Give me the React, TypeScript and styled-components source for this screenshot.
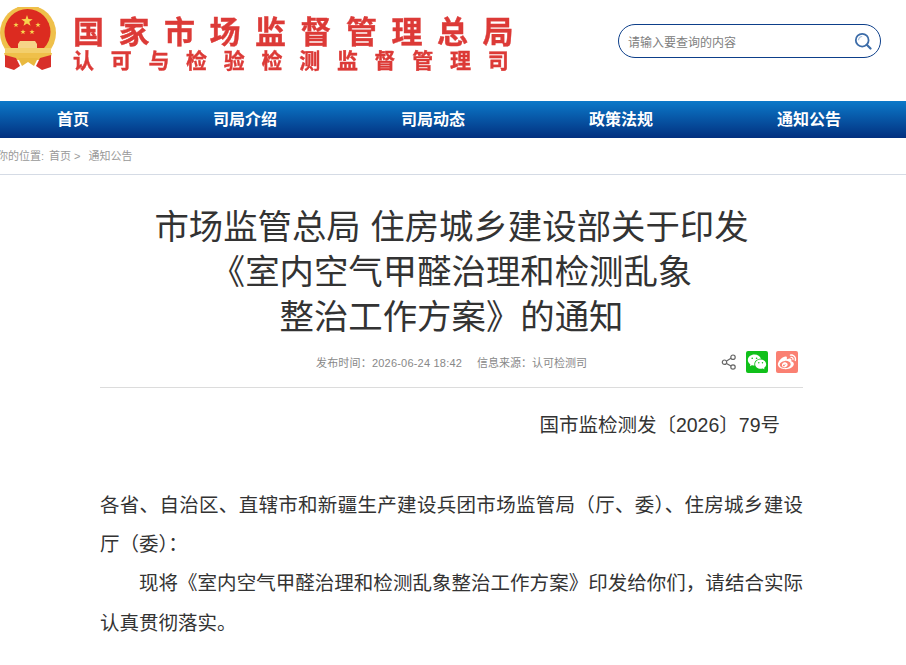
import React from "react";
import styled, { createGlobalStyle } from "styled-components";
import { RiWechatFill, RiWeiboFill } from "react-icons/ri";

const GlobalStyle = createGlobalStyle`
  html, body {
    margin: 0;
    padding: 0;
    background: #fff;
    overflow: hidden;
    font-family: "Liberation Sans", "Noto Sans CJK SC", sans-serif;
  }
`;

const Page = styled.div`
  width: 906px;
  height: 665px;
  overflow: hidden;
`;

const Header = styled.header`
  height: 101px;
  display: flex;
  align-items: flex-start;
  justify-content: space-between;
  padding-right: 25px;
`;

const Brand = styled.div`
  display: flex;
  margin-left: -1px;
  padding-top: 7px;
`;

const Emblem = styled.svg`
  width: 58px;
  height: 64px;
  flex: none;
`;

const BrandText = styled.div`
  margin-left: 16px;
  padding-top: 5px;
  color: #dc3a37;
  font-family: "Noto Sans CJK SC", sans-serif;
  font-weight: 700;
  white-space: nowrap;
  -webkit-text-stroke: 0.4px #dc3a37;
  filter: blur(0.3px);
`;

const BrandName = styled.div`
  font-size: 31px;
  line-height: 35px;
  letter-spacing: 14.5px;
`;

const BrandSub = styled.div`
  font-size: 21px;
  line-height: 22px;
  letter-spacing: 16.7px;
  margin-top: 1px;
`;

const SearchBox = styled.div`
  width: 263px;
  height: 34px;
  box-sizing: border-box;
  margin-top: 24px;
  padding: 0 8px 0 9px;
  border: 1px solid #0d3f8a;
  border-radius: 17px;
  display: flex;
  align-items: center;
  justify-content: space-between;
  font-size: 12px;
  color: #808080;
`;

const SearchIcon = styled.svg`
  width: 18px;
  height: 18px;
`;

const Nav = styled.nav`
  height: 37px;
  background: linear-gradient(#0c79c9, #02307f);
  display: flex;
  gap: 124px;
  padding-left: 57px;
  overflow: hidden;
`;

const NavItem = styled.a`
  height: 37px;
  line-height: 37px;
  color: #fff;
  font-size: 16px;
  font-weight: 700;
  white-space: nowrap;
`;

const Crumbs = styled.div`
  height: 36px;
  line-height: 36px;
  border-bottom: 1px solid #d5dbe5;
  font-size: 11px;
  color: #999;
  white-space: nowrap;
  overflow: hidden;
`;

const CrumbInner = styled.div`
  margin-left: -3px;
  display: flex;
  gap: 3px;
`;

const CrumbLink = styled.span<{ $space: number }>`
  margin-left: ${(p) => p.$space}px;
`;

const Article = styled.main`
  width: 703px;
  margin-left: 100px;
`;

const Title = styled.h1`
  margin: 30px 0 0;
  font-size: 34.4px;
  line-height: 44.8px;
  font-weight: 400;
  text-align: center;
  color: #333;
`;

const MetaRow = styled.div`
  display: grid;
  grid-template-columns: 1fr auto 1fr;
  align-items: center;
  height: 45px;
  border-bottom: 1px solid #dcdcdc;
  padding-bottom: 3px;
  font-size: 11px;
  color: #888;
`;

const MetaText = styled.div`
  grid-column: 2;
  display: flex;
  gap: 15px;
`;

const MetaDate = styled.span`
  letter-spacing: 0.2px;
`;

const Shares = styled.div`
  grid-column: 3;
  display: flex;
  justify-content: flex-end;
  align-items: center;
  gap: 8px;
  padding-right: 5px;
`;

const ShareGlyph = styled.svg`
  width: 16px;
  height: 16px;
  margin-right: 1px;
`;

const ShareBadge = styled.span<{ $bg: string }>`
  width: 22px;
  height: 22px;
  border-radius: 2px;
  background: ${(p) => p.$bg};
  display: flex;
  align-items: center;
  justify-content: center;
  color: #fff;
  font-size: 20px;
`;

const Body = styled.div`
  margin-top: 18px;
  font-size: 19.5px;
  line-height: 39.3px;
  color: #333;
`;

const DocNumber = styled.p`
  margin: 0 0 40px;
  padding-right: 23px;
  text-align: right;
`;

const Paragraph = styled.p<{ $indent?: boolean }>`
  margin: 0;
  text-align: justify;
  text-indent: ${(p) => (p.$indent ? "2em" : "0")};
`;

const navItems = ["首页", "司局介绍", "司局动态", "政策法规", "通知公告"];

// full-width punctuation is escaped on purpose
const dateLine = "发布时间\uFF1A2026-06-24 18:42";
const sourceLine = "信息来源\uFF1A认可检测司";
const greeting = "各省、自治区、直辖市和新疆生产建设兵团市场监管局\uFF08厅、委\uFF09、住房城乡建设厅\uFF08委\uFF09\uFF1A";
const notice = "现将《室内空气甲醛治理和检测乱象整治工作方案》印发给你们\uFF0C请结合实际认真贯彻落实。";

const star = (cx: number, cy: number, r: number) => {
  const pts: string[] = [];
  for (let i = 0; i < 10; i++) {
    const rad = i % 2 ? r * 0.4 : r;
    const a = (Math.PI / 5) * i - Math.PI / 2;
    pts.push(`${(cx + rad * Math.cos(a)).toFixed(2)},${(cy + rad * Math.sin(a)).toFixed(2)}`);
  }
  return pts.join(" ");
};

// viewBox uses page coordinates so the emblem parts line up with the picture
const EmblemIcon = () => (
  <Emblem viewBox="-1 7 58 64">
    <circle cx="28" cy="33" r="28" fill="#efc04a" />
    <circle cx="27.5" cy="32" r="23" fill="#dc2b20" />
    <polygon points={star(27, 21, 6)} fill="#f8d24e" />
    <polygon points={star(16, 25, 2.8)} fill="#f8d24e" />
    <polygon points={star(38, 25, 2.8)} fill="#f8d24e" />
    <polygon points={star(23, 32, 2.8)} fill="#f8d24e" />
    <polygon points={star(32, 32, 2.8)} fill="#f8d24e" />
    <path d="M20 41 L35 41 L37 44 L37 48 L18 48 L18 44 Z" fill="#f6d488" />
    <rect x="5" y="48" width="46" height="5" fill="#f3cf6c" />
    <path d="M4 53 L52 53 L50 60 L6 60 Z" fill="#efc04a" />
    <path d="M5 55 L16 58 L20 66 L14 70 L5 67 Z" fill="#d8302a" />
    <path d="M51 55 L40 58 L36 66 L42 70 L51 67 Z" fill="#d8302a" />
    <path d="M18 58 L38 58 L34 66 L28 62 L22 66 Z" fill="#e9b93f" />
  </Emblem>
);

export default function App() {
  return (
    <Page>
      <GlobalStyle />
      <Header>
        <Brand>
          <EmblemIcon />
          <BrandText>
            <BrandName>国家市场监督管理总局</BrandName>
            <BrandSub>认可与检验检测监督管理司</BrandSub>
          </BrandText>
        </Brand>
        <SearchBox>
          <span>请输入要查询的内容</span>
          <SearchIcon viewBox="0 0 18 18" fill="none">
            <circle cx="8.2" cy="8.2" r="6.4" stroke="#3c6ca8" strokeWidth="1.8" />
            <path d="M4.5 8.2a3.7 3.7 0 0 1 3.7-3.7" stroke="#a9c0dc" strokeWidth="1.2" />
            <path d="M12.8 12.8 L16.5 16.5" stroke="#3c6ca8" strokeWidth="2.2" strokeLinecap="round" />
          </SearchIcon>
        </SearchBox>
      </Header>
      <Nav>
        {navItems.map((n) => (
          <NavItem key={n}>{n}</NavItem>
        ))}
      </Nav>
      <Crumbs>
        <CrumbInner>
          <span>你的位置:</span>
          <CrumbLink $space={2}>首页</CrumbLink>
          <span>&gt;</span>
          <CrumbLink $space={5}>通知公告</CrumbLink>
        </CrumbInner>
      </Crumbs>
      <Article>
        <Title>
          市场监管总局 住房城乡建设部关于印发
          <br />
          《室内空气甲醛治理和检测乱象
          <br />
          整治工作方案》的通知
        </Title>
        <MetaRow>
          <MetaText>
            <MetaDate>{dateLine}</MetaDate>
            <span>{sourceLine}</span>
          </MetaText>
          <Shares>
            <ShareGlyph viewBox="0 0 16 16" fill="none" stroke="#666" strokeWidth="1.2">
              <circle cx="3.5" cy="8.2" r="2.2" />
              <circle cx="12" cy="3.2" r="2.2" />
              <circle cx="12" cy="13" r="2.2" />
              <path d="M5.5 7 L10 4.3 M5.5 9.4 L10 12" />
            </ShareGlyph>
            <ShareBadge $bg="#10c01a">
              <RiWechatFill />
            </ShareBadge>
            <ShareBadge $bg="#fa8072">
              <RiWeiboFill />
            </ShareBadge>
          </Shares>
        </MetaRow>
        <Body>
          <DocNumber>国市监检测发〔2026〕79号</DocNumber>
          <Paragraph>{greeting}</Paragraph>
          <Paragraph $indent>{notice}</Paragraph>
        </Body>
      </Article>
    </Page>
  );
}
